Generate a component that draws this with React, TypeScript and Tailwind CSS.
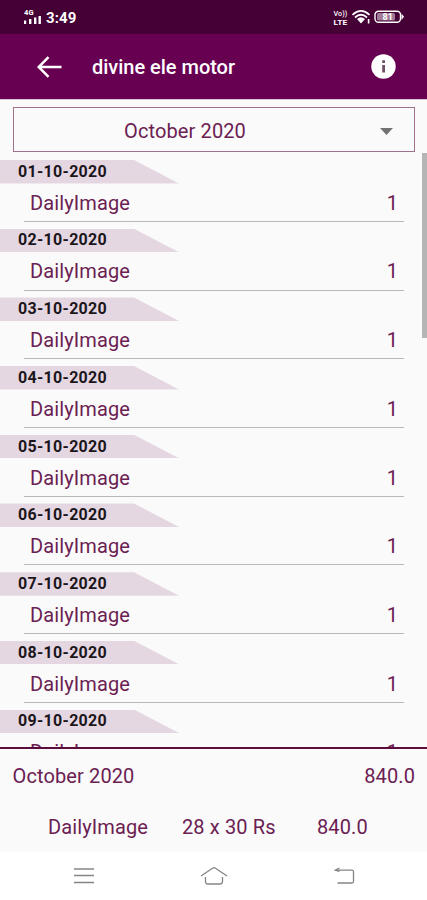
const days = ["01", "02", "03", "04", "05", "06", "07", "08", "09"];

function StatusBar() {
  return (
    <div className="flex h-[34px] shrink-0 items-center justify-between bg-[#450035] pr-[22px] pl-[23px] text-white">
      <div className="flex items-center gap-[4px]">
        <svg width="19" height="16" viewBox="0 0 19 16" fill="#fff">
          <text x="1" y="6" fontSize="7.5" fontWeight="700" fontFamily="Roboto, sans-serif">4G</text>
          <rect x="1" y="11.5" width="2.2" height="3.5" />
          <rect x="6" y="10" width="2.4" height="5" />
          <rect x="11" y="8.5" width="2.4" height="6.5" />
          <rect x="15.5" y="7" width="2.4" height="8" />
        </svg>
        <span className="pt-[1px] text-[15px] leading-4 font-bold tracking-[0.1px]">3:49</span>
      </div>
      <svg width="72" height="18" viewBox="0 0 72 18" fill="#fff">
        <g fontFamily="Roboto, sans-serif" fontSize="8" fontWeight="500">
          <text x="0.5" y="8" textLength="14" lengthAdjust="spacingAndGlyphs">Vo))</text>
          <text x="0.5" y="16.5" textLength="14" lengthAdjust="spacingAndGlyphs" fontWeight="700">LTE</text>
        </g>
        <g fill="none" stroke="#fff" strokeWidth="1.7">
          <path d="M19.5 6.8Q28 -1 36.5 6.8" />
          <path d="M22 9.5Q28 4 34 9.5" />
        </g>
        <path d="M24 11Q28 7.5 32 11L28 15.5Z" />
        <path d="M34.8 11h1.6v4.5h-1.6z" />
        <rect x="42" y="3.2" width="25.5" height="11" rx="3.5" fill="none" stroke="#fff" strokeWidth="1.4" />
        <rect x="44" y="5" width="18" height="7.5" rx="1.5" fill="#a27b98" />
        <path d="M68.5 5.5L71 8.7L68.5 12Z" />
        <text x="49.5" y="12" fontSize="9" fontWeight="700" fontFamily="Roboto, sans-serif">81</text>
      </svg>
    </div>
  );
}

function AppBar() {
  return (
    <header className="flex h-[65px] shrink-0 items-center bg-[#680052] pr-[31px] pl-[37px] text-white">
      <svg width="25" height="22" viewBox="0 0 25 22" fill="none" stroke="#fff" strokeWidth="2.5">
        <path d="M24.5 11H2M11.5 1.2L1.7 11L11.5 20.8" />
      </svg>
      <h1 className="ml-[30px] flex-1 pt-[1px] text-[20px] font-medium tracking-[-0.02px]">divine ele motor</h1>
      <svg width="25" height="25" viewBox="0 0 25 25">
        <circle cx="12.5" cy="12.5" r="12.2" fill="#fff" />
        <path d="M11.2 6.2h2.8v2.7h-2.8zM11.2 11h2.8v7.5h-2.8z" fill="#705064" />
      </svg>
    </header>
  );
}

function DayEntry({ day }: { day: string }) {
  return (
    <section className="h-[68.7px] shrink-0">
      <div className="flex h-[23.5px] w-[179px] items-center bg-[#e5d7e2] pl-[18px] text-[16px] font-bold tracking-[0.3px] text-[#1b161b] [clip-path:polygon(0_0,134px_0,100%_100%,0_100%)]">
        {day}-10-2020
      </div>
      <div className="mr-[23px] ml-[24px] flex h-[38.5px] items-center justify-between border-b border-[#b9b9b9] pt-[1px] pr-[6px] pl-[6px]">
        <span>DailyImage</span>
        <span>1</span>
      </div>
    </section>
  );
}

function NavigationBar() {
  return (
    <nav className="flex h-[48px] shrink-0 items-center justify-between bg-white pr-[72px] pl-[74px] text-[#858585]">
      <svg width="20" height="18" viewBox="0 0 20 18" fill="none" stroke="currentColor" strokeWidth="1.6">
        <path d="M0 2h20M0 8.5h20M0 15.5h20" />
      </svg>
      <svg width="28" height="20" viewBox="0 0 28 20" fill="none" stroke="currentColor" strokeWidth="1.3">
        <path d="M1 10L12.5 2.2Q14 1.2 15.5 2.2L27 10M5.5 11v4.5q0 2.5 2.5 2.5h12q2.5 0 2.5-2.5V11" />
      </svg>
      <svg width="21" height="18" viewBox="0 0 21 18" fill="none" stroke="currentColor" strokeWidth="1.3">
        <path d="M1 3.2H18q1.5 0 1.5 1.5V14.5q0 1.5-1.5 1.5H3.5M5.5 1L1.2 3.2L5.5 4.5" />
      </svg>
    </nav>
  );
}

export default function App() {
  return (
    <div className="flex h-[900px] w-full flex-col overflow-hidden bg-[#fafafa] font-['Roboto','Noto_Sans',sans-serif] text-[20px] leading-6 tracking-[0.12px] text-[#6b2052]">
      <StatusBar />
      <AppBar />
      <main className="flex min-h-0 flex-1 flex-col border-t border-[#d8c7d3]">
        <div className="mr-[12px] ml-[13px] mt-[7px] flex h-[45px] shrink-0 items-center border border-[#9c7189] pt-[3px] pr-[21px]">
          <span className="flex-1 pr-[24px] text-center">October 2020</span>
          <svg width="13" height="7" viewBox="0 0 13 7"><path d="M0 0h13L6.5 7z" fill="#737373" /></svg>
        </div>
        <div className="flex min-h-0 flex-1">
          <div className="flex min-h-0 flex-1 flex-col overflow-hidden pt-[8px]">
            {days.map((day) => <DayEntry key={day} day={day} />)}
          </div>
          <div className="-ml-[5px] mt-[1px] h-[185px] w-[5px] shrink-0 bg-[#b5b5b5]" />
        </div>
      </main>
      <footer className="h-[105px] shrink-0 border-t-2 border-[#5b0b3c]">
        <div className="flex items-center justify-between pt-[15px] pr-[12px] pl-[12.5px]">
          <span>October 2020</span>
          <span>840.0</span>
        </div>
        <div className="mt-[27px] grid grid-cols-[134px_135px_1fr] pl-[48px]">
          <span>DailyImage</span>
          <span>28 x 30 Rs</span>
          <span>840.0</span>
        </div>
      </footer>
      <NavigationBar />
    </div>
  );
}
